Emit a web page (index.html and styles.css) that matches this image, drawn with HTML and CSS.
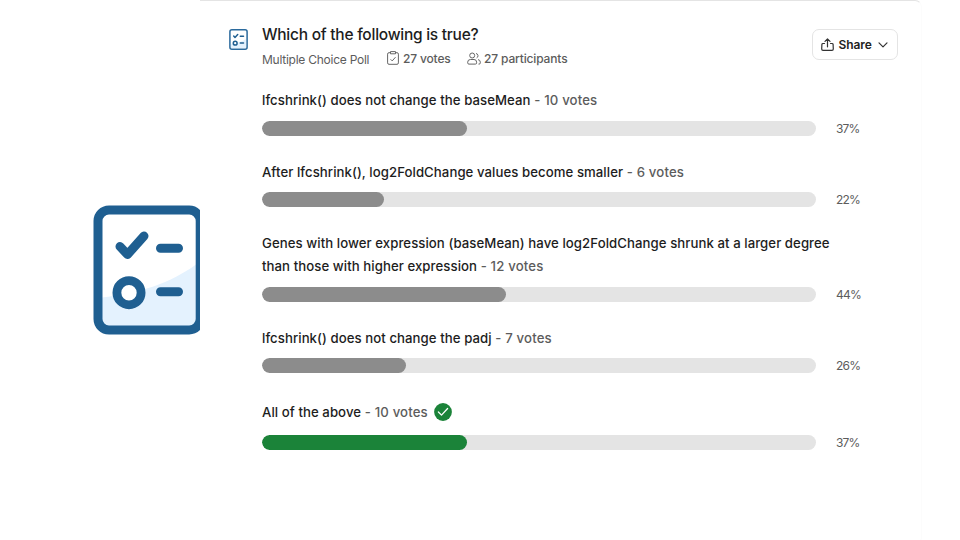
FILE: index.html
```html
<!DOCTYPE html>
<html lang="en">
<head>
<meta charset="utf-8">
<title>Poll results</title>
<link rel="stylesheet" href="styles.css">
</head>
<body>
<div class="page">
  <aside class="side">
    <svg class="side-icon" viewBox="93 205 112 130">
      <rect x="97.700" y="210" width="102.400" height="120.300" rx="11" fill="#fff"/>
      <path d="M102 297.500C137 294 171 283 196 264.500V326H102Z" fill="#e4f2fe"/>
      <rect x="98" y="210" width="102.200" height="120" rx="11" fill="none" stroke="#1f5f91" stroke-width="9"/>
      <path d="M120 246.500L127.500 254.500L144 236" fill="none" stroke="#1f5f91" stroke-width="9" stroke-linecap="round" stroke-linejoin="round"/>
      <path d="M160.500 248.200H178.500M160.500 291.800H178.500" stroke="#1f5f91" stroke-width="9" stroke-linecap="round"/>
      <circle cx="129" cy="292.700" r="12.100" fill="#fff" stroke="#1f5f91" stroke-width="8.800"/>
    </svg>
  </aside>
  <main class="panel">
    <header class="head">
      <svg class="head-icon" viewBox="0 0 19 21">
        <rect x=".9" y=".8" width="17.200" height="19.400" rx="2" fill="#fff" stroke="#2b6a9d" stroke-width="1.500"/>
        <path d="M2 15q9-1 15-5v9H2z" fill="#e4f2fe"/>
        <path d="M4.700 7.100l1.300 1.400 2.700-2.900M11.300 7.300h3.200M11.300 14.100h3.200" fill="none" stroke="#1f5f91" stroke-width="1.500" stroke-linecap="round" stroke-linejoin="round"/>
        <circle cx="6.200" cy="14.200" r="1.900" fill="#fff" stroke="#1f5f91" stroke-width="1.500"/>
      </svg>
      <div class="heading">
        <h1>Which of the following is true?</h1>
        <div class="meta">
          <span class="kind">Multiple Choice Poll</span>
          <svg class="clip" viewBox="0 0 12 14"><path d="M3.500 1.700H2A1.400 1.400 0 0 0 .6 3.100v8.800A1.400 1.400 0 0 0 2 13.300h8a1.400 1.400 0 0 0 1.400-1.400V3.100A1.400 1.400 0 0 0 10 1.700H8.500M3.500 .6h5v2.200h-5zM3.600 8.300l1.600 1.600 3.300-3.700"/></svg>
          <span class="votes">27 votes</span>
          <svg class="people" viewBox="0 0 14 13"><circle cx="5.200" cy="3.500" r="2.500"/><path d="M3.400 7.500h3.600a2.600 2.600 0 0 1 2.600 2.600v.8q0 1.200-1.200 1.200H1.900Q.7 12.100.7 10.900v-.8a2.700 2.700 0 0 1 2.700-2.600zM9 1.500a2.300 2.300 0 0 1 .6 4.400M11 7.600q2.300.4 2.300 2.500v.8q0 1.200-1.200 1.200h-.6"/></svg>
          <span class="people-count">27 participants</span>
        </div>
      </div>
      <button class="share" type="button">
        <svg class="up" viewBox="0 0 13 13"><path d="M3.500 5.500H1.900Q1 5.500.9 6.400L.7 11q0 1.400 1.300 1.400h9q1.300 0 1.300-1.400l-.2-4.600q-.1-.9-1-.9H9.500M6.500 8.800V.9M4 3.300L6.500.8 9 3.300"/></svg>
        <span>Share</span>
        <svg class="down" viewBox="0 0 10 6"><path d="M1 .9l4 4 4-4"/></svg>
      </button>
    </header>
    <section class="options">
      <div class="option"><p><b>lfcshrink() does not change the baseMean</b> - 10 votes</p><div class="result"><div class="track"><i style="width:37%"></i></div><span>37%</span></div></div>
      <div class="option"><p><b>After lfcshrink(), log2FoldChange values become smaller</b> - 6 votes</p><div class="result"><div class="track"><i style="width:22%"></i></div><span>22%</span></div></div>
      <div class="option"><p><b>Genes with lower expression (baseMean) have log2FoldChange shrunk at a larger degree<br>than those with higher expression</b> - 12 votes</p><div class="result"><div class="track"><i style="width:44%"></i></div><span>44%</span></div></div>
      <div class="option"><p><b>lfcshrink() does not change the padj</b> - 7 votes</p><div class="result"><div class="track"><i style="width:26%"></i></div><span>26%</span></div></div>
      <div class="option correct"><p><b>All of the above</b> - 10 votes <svg viewBox="0 0 18 18"><circle cx="9" cy="9" r="8.900" fill="#1b8339"/><path d="M4.400 9l3.100 3.100 6.100-6.600" fill="none" stroke="#fff" stroke-width="1.300" stroke-linecap="round" stroke-linejoin="round"/></svg></p><div class="result"><div class="track"><i style="width:37%"></i></div><span>37%</span></div></div>
    </section>
  </main>
</div>
</body>
</html>
```
FILE: styles.css
```css
* { box-sizing: border-box; }
body { margin: 0; background: #fff; font-family: Inter, "Liberation Sans", sans-serif; color: #1d1d1d; }
svg { flex: none; }
.page { display: flex; width: 960px; height: 540px; overflow: hidden; }
.side { width: 200px; padding: 205px 0 0 93px; overflow: hidden; }
.side-icon { display: block; width: 112px; height: 130px; }
.panel { width: 722px; height: 544px; flex: none; border: 1px solid #e4e4e4; border-left: 0; border-right-color: #fcfcfc; border-radius: 0 7px 7px 0; padding: 23px 23px 0 29px; }
.head { display: flex; height: 65px; }
.head-icon { width: 19px; height: 21px; margin: 5px 14px 0 0; }
.heading { flex: 1; }
h1 { margin: 0; font-size: 15.500px; line-height: 21px; font-weight: 500; letter-spacing: -.25px; white-space: nowrap; }
.meta { display: flex; align-items: center; height: 18px; margin-top: 4px; font-size: 12px; letter-spacing: -.25px; color: #5c5c5c; white-space: nowrap; }
.meta span { display: block; }
.kind { width: 125px; padding-top: 2px; }
.votes, .people-count { font-weight: 500; letter-spacing: -.15px; }
.clip { width: 12px; height: 14px; margin-right: 4px; }
.votes { width: 64px; }
.people { width: 14px; height: 13px; margin-right: 3px; }
.clip, .people { fill: none; stroke: #666; stroke-width: 1; stroke-linejoin: round; }
.share { display: flex; align-items: center; width: 86px; height: 31px; margin: 5px 0 0; padding: 0 9px 0 8px; border: 1px solid #e4e4e4; border-radius: 7px; background: #fff; color: #222; font: 600 12px Inter, sans-serif; letter-spacing: -.1px; }
.up { width: 13px; height: 13px; margin-right: 4.500px; }
.down { width: 10px; height: 6px; margin-left: auto; }
.up, .down { fill: none; stroke: #333; stroke-width: 1.2; stroke-linecap: round; stroke-linejoin: round; }
.options { padding-left: 33px; }
.option { margin-bottom: 24.400px; }
.option p { margin: 0 0 7.900px; padding-top: .4px; font-size: 13.200px; line-height: 23.300px; font-weight: 450; letter-spacing: .15px; color: #5c5c5c; white-space: nowrap; }
.option b { font-weight: 500; letter-spacing: .06px; color: #1d1d1d; }
.result { display: flex; align-items: center; height: 15.400px; }
.track { width: 554px; height: 15.400px; border-radius: 8px; background: #e4e4e4; overflow: hidden; }
.track i { display: block; height: 100%; border-radius: 8px; background: #8c8c8c; }
.result span { margin-left: 20px; font-size: 12px; line-height: 15px; letter-spacing: -.8px; color: #5c5c5c; }
.correct { padding-top: 1.200px; }
.correct p { display: flex; align-items: center; height: 26px; padding-top: 1px; margin-bottom: 9.700px; white-space: pre; }
.correct svg { width: 18px; height: 18px; margin: -1px 0 0 2.500px; }
.correct i { background: #1b8339; }
```
